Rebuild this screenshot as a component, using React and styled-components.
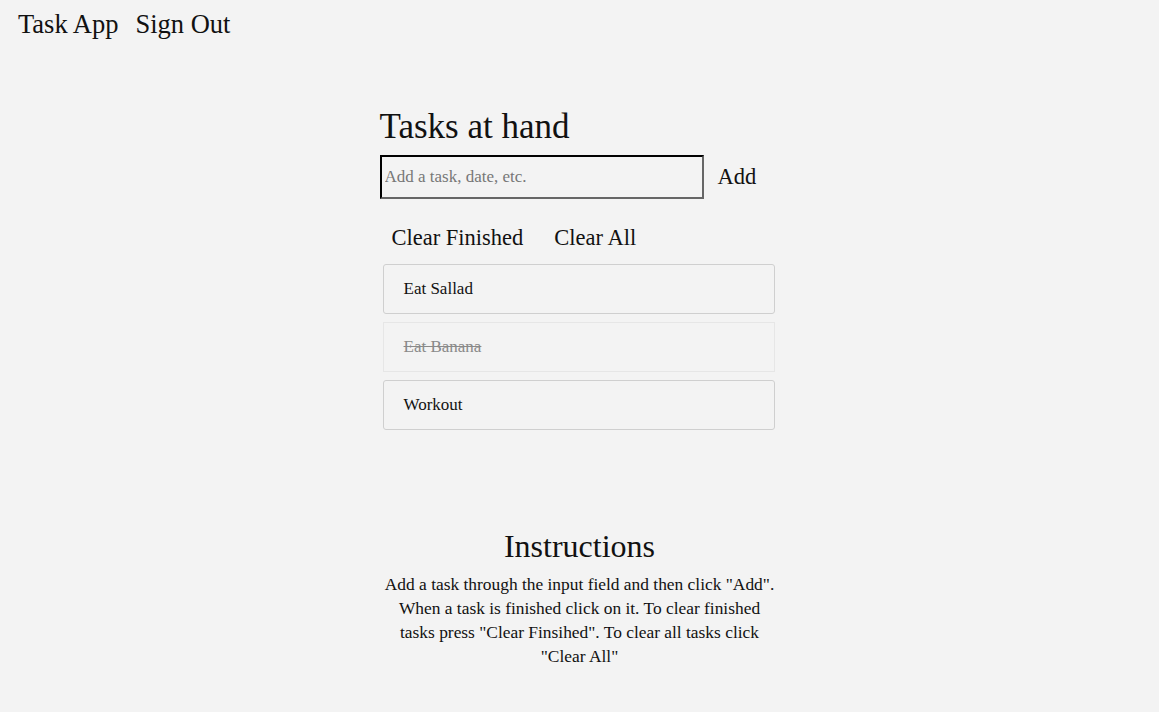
import React, { useState } from 'react'
import styled, { createGlobalStyle } from 'styled-components'

const GlobalStyle = createGlobalStyle`
  html, body {
    margin: 0;
    padding: 0;
    background: #f3f3f3;
  }
  body {
    font-family: 'Liberation Serif', 'Times New Roman', serif;
    color: #111;
  }
  * {
    box-sizing: border-box;
  }
`

const Nav = styled.nav`
  display: flex;
  align-items: center;
  gap: 17px;
  padding: 9px 18px 0;
  height: 40px;
`
const NavLink = styled.a`
  font-size: 26.5px;
  color: #111;
  text-decoration: none;
  cursor: pointer;
`
const Main = styled.main`
  width: 400px;
  margin: 0 auto;
  padding-top: 67px;
`
const Title = styled.h2`
  margin: 0;
  font-size: 35px;
  font-weight: normal;
  line-height: 40px;
`
const Form = styled.form`
  display: flex;
  align-items: center;
  gap: 8px;
  margin-top: 8px;
`
const Input = styled.input`
  width: 324px;
  height: 44px;
  padding: 0 3px;
  background: transparent;
  border: 2px inset #767676;
  border-top-color: #222;
  border-left-color: #222;
  border-bottom-color: #666;
  border-right-color: #666;
  font-family: inherit;
  font-size: 17px;
  color: #111;
  outline: none;
  &::placeholder {
    color: #777;
  }
`
const TextButton = styled.button`
  background: transparent;
  border: none;
  padding: 4px 6px;
  font-family: inherit;
  font-size: 22.5px;
  color: #111;
  cursor: pointer;
`
const Controls = styled.div`
  display: flex;
  gap: 19px;
  margin-top: 22px;
  padding-left: 6px;
`
const List = styled.ul`
  list-style: none;
  margin: 9px 0 0 3px;
  padding: 0;
  width: 392px;
  display: flex;
  flex-direction: column;
  gap: 8px;
`
const Item = styled.li`
  height: 50px;
  display: flex;
  align-items: center;
  padding-left: 20px;
  border: 1px solid ${(p) => (p.done ? '#e6e6e6' : '#cfcfcf')};
  border-radius: ${(p) => (p.done ? 0 : 3)}px;
  font-size: 17px;
  color: ${(p) => (p.done ? '#8a8a8a' : '#111')};
  text-decoration: ${(p) => (p.done ? 'line-through' : 'none')};
  cursor: pointer;
`
const Instructions = styled.section`
  margin-top: 98px;
  text-align: center;
`
const SubTitle = styled.h3`
  margin: 0;
  font-size: 32px;
  font-weight: normal;
  line-height: 36px;
`
const Text = styled.p`
  margin: 8px 0 0;
  font-size: 17.4px;
  line-height: 24px;
`

const initialTasks = [
  { id: 1, text: 'Eat Sallad', done: false },
  { id: 2, text: 'Eat Banana', done: true },
  { id: 3, text: 'Workout', done: false }
]

function App() {
  const [tasks, setTasks] = useState(initialTasks)
  const [value, setValue] = useState('')

  const handleSubmit = (e) => {
    e.preventDefault()
    if (!value.trim()) return
    setTasks([...tasks, { id: Date.now(), text: value, done: false }])
    setValue('')
  }
  const toggle = (id) =>
    setTasks(tasks.map((t) => (t.id === id ? { ...t, done: !t.done } : t)))

  return (
    <>
      <GlobalStyle />
      <Nav>
        <NavLink>Task App</NavLink>
        <NavLink>Sign Out</NavLink>
      </Nav>
      <Main>
        <Title>Tasks at hand</Title>
        <Form onSubmit={handleSubmit}>
          <Input
            placeholder="Add a task, date, etc."
            value={value}
            onChange={(e) => setValue(e.target.value)}
          />
          <TextButton type="submit">Add</TextButton>
        </Form>
        <Controls>
          <TextButton onClick={() => setTasks(tasks.filter((t) => !t.done))}>
            Clear Finished
          </TextButton>
          <TextButton onClick={() => setTasks([])}>Clear All</TextButton>
        </Controls>
        <List>
          {tasks.map((t) => (
            <Item key={t.id} done={t.done} onClick={() => toggle(t.id)}>
              {t.text}
            </Item>
          ))}
        </List>
        <Instructions>
          <SubTitle>Instructions</SubTitle>
          <Text>
            Add a task through the input field and then click "Add". When a task is
            finished click on it. To clear finished tasks press "Clear Finsihed". To
            clear all tasks click "Clear All"
          </Text>
        </Instructions>
      </Main>
    </>
  )
}

export default App
